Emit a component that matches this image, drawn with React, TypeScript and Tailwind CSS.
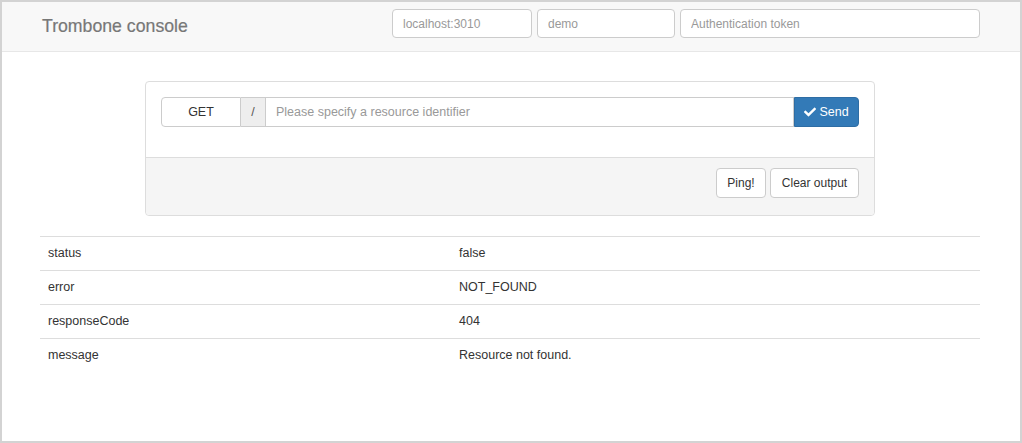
import { FaCheck } from "react-icons/fa";

type Row = {
  key: string;
  value: string;
};

const rows: Row[] = [
  { key: "status", value: "false" },
  { key: "error", value: "NOT_FOUND" },
  { key: "responseCode", value: "404" },
  { key: "message", value: "Resource not found." },
];

const font = { fontFamily: '"Liberation Sans", Arial, sans-serif' };

const App = () => {
  return (
    <div
      className="h-[443px] w-[1022px] border-2 border-[#d3d3d3] bg-white text-[#333] overflow-hidden"
      style={font}
    >
      {/* navbar */}
      <div className="flex h-[50px] border-b border-[#e7e7e7] bg-[#f8f8f8] pl-10 pr-[40px]">
        <div className="flex h-[48px] items-center text-[17.7px] text-[#777] [-webkit-text-stroke:0.2px_#777]">
          Trombone console
        </div>
        <div className="ml-auto flex gap-[5px] pt-[7px]">
          <input
            className="h-[29px] w-[140px] rounded-[4px] border border-[#ccc] bg-white px-[10px] text-[12px] placeholder:text-[#999] outline-none"
            placeholder="localhost:3010"
          />
          <input
            className="h-[29px] w-[138px] rounded-[4px] border border-[#ccc] bg-white px-[10px] text-[12px] placeholder:text-[#999] outline-none"
            placeholder="demo"
          />
          <input
            className="h-[29px] w-[300px] rounded-[4px] border border-[#ccc] bg-white px-[10px] text-[12px] placeholder:text-[#999] outline-none"
            placeholder="Authentication token"
          />
        </div>
      </div>

      <div className="px-[38px] pt-[29px]">
        {/* request panel */}
        <div className="ml-[105px] w-[730px] rounded-[4px] border border-[#ddd] bg-white">
          <div className="px-[15px] pt-[15px] pb-[30px]">
            <div className="flex h-[30px]">
              <button className="w-[80px] rounded-l-[4px] border border-[#ccc] bg-white text-[12.5px] text-[#333]">
                GET
              </button>
              <span className="flex w-[24px] items-center justify-center border-y border-[#ccc] bg-[#eee] text-[12.5px] text-[#555]">
                /
              </span>
              <input
                className="flex-1 border border-[#ccc] bg-white px-[10px] text-[12.5px] placeholder:text-[#999] outline-none"
                placeholder="Please specify a resource identifier"
              />
              <button className="flex w-[65px] items-center justify-center gap-[3px] rounded-r-[4px] border border-[#2e6da4] bg-[#337ab7] text-[12.5px] text-white">
                <FaCheck size={12} />
                Send
              </button>
            </div>
          </div>
          <div className="flex justify-end gap-[4px] rounded-b-[4px] border-t border-[#ddd] bg-[#f5f5f5] px-[15px] pt-[10px] pb-[17px]">
            <button className="h-[30px] w-[50px] rounded-[4px] border border-[#ccc] bg-white text-[12px] text-[#333]">
              Ping!
            </button>
            <button className="h-[30px] w-[89px] rounded-[4px] border border-[#ccc] bg-white text-[12px] text-[#333]">
              Clear output
            </button>
          </div>
        </div>

        {/* output table */}
        <div className="mt-[20px] w-[940px] text-[12.5px]">
          {rows.map((row) => (
            <div key={row.key} className="grid h-[34px] grid-cols-[411px_1fr] items-center border-t border-[#ddd]">
              <span className="px-2">{row.key}</span>
              <span className="px-2">{row.value}</span>
            </div>
          ))}
        </div>
      </div>
    </div>
  );
};

export default App;
